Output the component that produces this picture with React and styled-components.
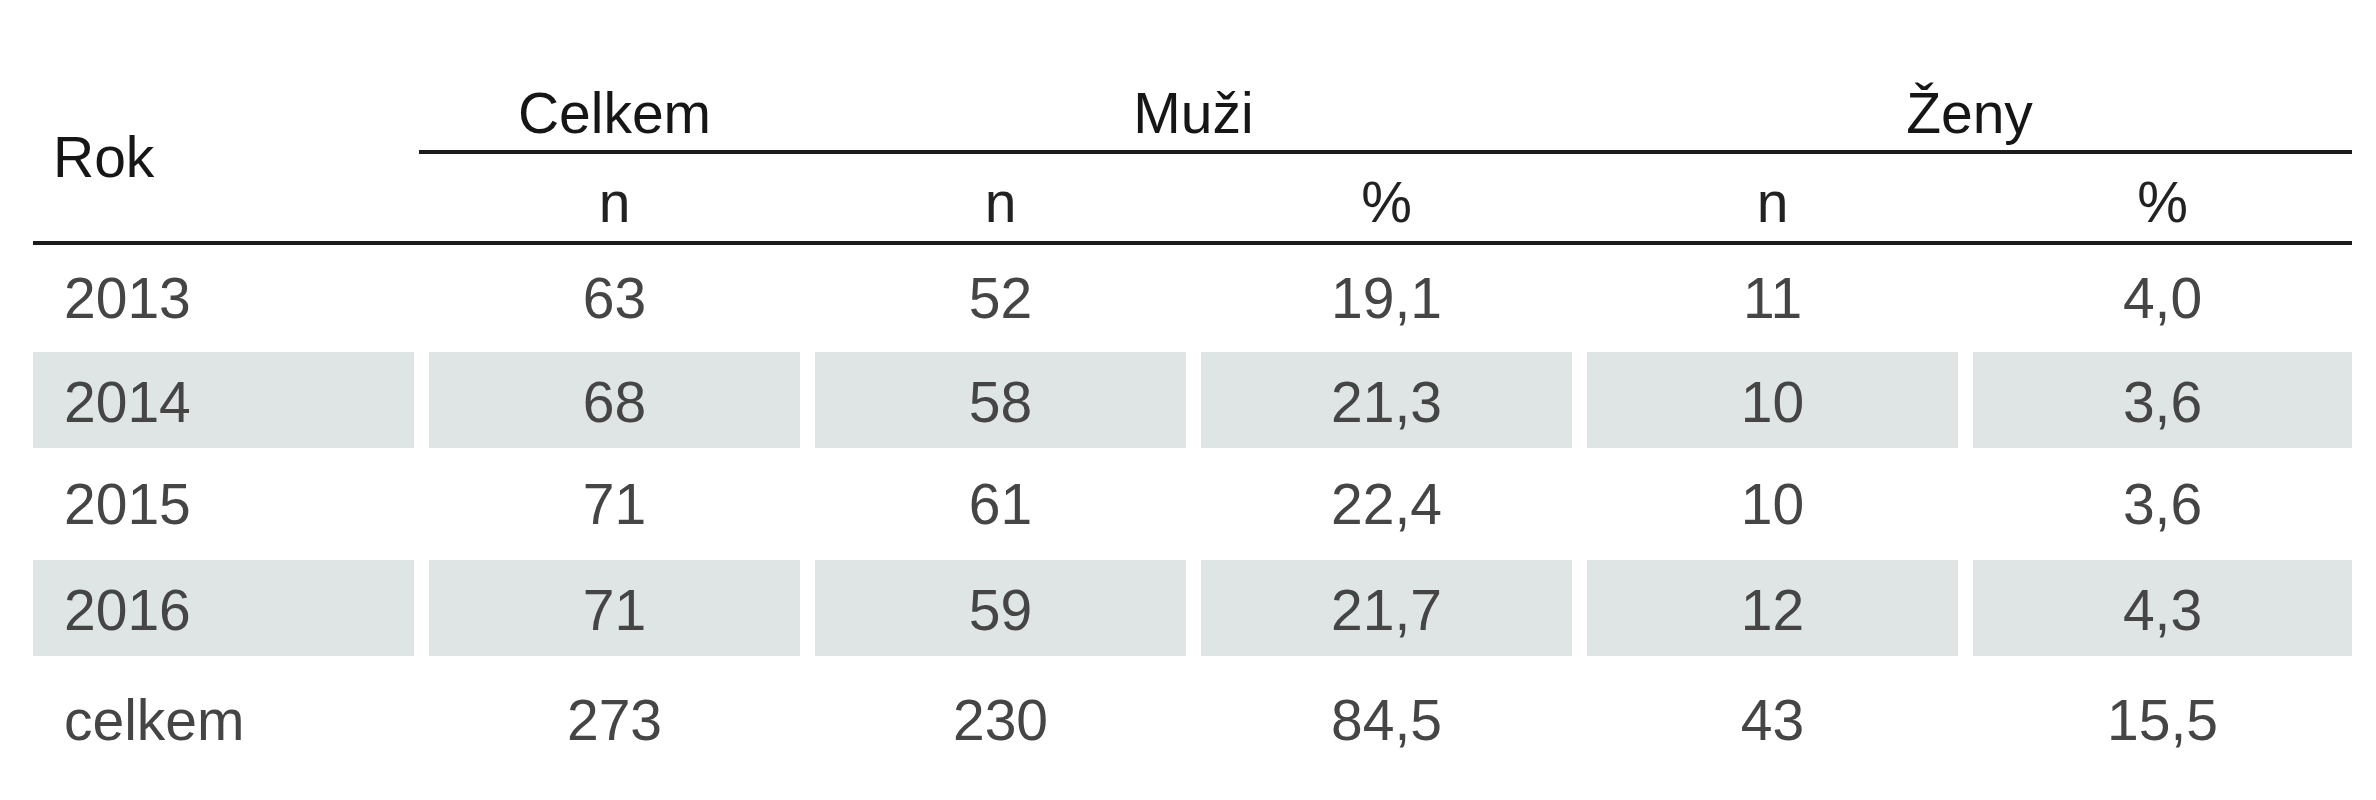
import styled, { createGlobalStyle } from "styled-components";

const GlobalStyle = createGlobalStyle`
  html, body {
    margin: 0;
    padding: 0;
    background: #ffffff;
  }
  body {
    font-family: "Liberation Sans", Arial, sans-serif;
  }
`;

// row heights follow the printed table: white rows are taller than shaded bands
const rows = [
  { h: 107, v: ["2013", "63", "52", "19,1", "11", "4,0"] },
  { h: 96, v: ["2014", "68", "58", "21,3", "10", "3,6"], shaded: true },
  { h: 112, v: ["2015", "71", "61", "22,4", "10", "3,6"] },
  { h: 96, v: ["2016", "71", "59", "21,7", "12", "4,3"], shaded: true },
  { h: 128, v: ["celkem", "273", "230", "84,5", "43", "15,5"] },
];

export default function App() {
  return (
    <Page>
      <GlobalStyle />
      <Table>
        <Head>
          <RokCell>Rok</RokCell>
          <GroupTitle $col="2 / 3">Celkem</GroupTitle>
          <GroupTitle $col="3 / 5">Muži</GroupTitle>
          <GroupTitle $col="5 / 7">Ženy</GroupTitle>
          <GroupRule />
          <SubTitle $col="2 / 3">n</SubTitle>
          <SubTitle $col="3 / 4">n</SubTitle>
          <SubTitle $col="4 / 5">%</SubTitle>
          <SubTitle $col="5 / 6">n</SubTitle>
          <SubTitle $col="6 / 7">%</SubTitle>
        </Head>
        <HeadRule />
        <Body>
          {rows.map((r) => (
            <Row key={r.v[0]} $h={r.h}>
              {r.v.map((v, j) => (
                <Cell key={j} $shaded={r.shaded} $first={j === 0}>
                  {v}
                </Cell>
              ))}
            </Row>
          ))}
        </Body>
      </Table>
    </Page>
  );
}

const Page = styled.div`
  width: 2376px;
  height: 800px;
  box-sizing: border-box;
  padding-left: 33px;
  overflow: hidden;
`;

const Table = styled.div`
  width: 2319px;
  display: flex;
  flex-direction: column;
`;

const columns = `381px 371px 371px 371px 371px 379px`;

const Head = styled.div`
  display: grid;
  grid-template-columns: ${columns};
  grid-template-rows: 150px 4px 87px;
  column-gap: 15px;
  color: #161616;
  font-size: 57px;
  line-height: 1;
`;

const RokCell = styled.div`
  grid-column: 1 / 2;
  grid-row: 1 / 4;
  align-self: end;
  padding: 0 0 55px 20px;
`;

const GroupTitle = styled.div`
  grid-column: ${(p) => p.$col};
  grid-row: 1 / 2;
  align-self: end;
  text-align: center;
  padding-bottom: 8px;
`;

const GroupRule = styled.div`
  grid-column: 2 / 7;
  grid-row: 2 / 3;
  margin-left: -10px;
  background: #1b1b1b;
`;

const SubTitle = styled.div`
  grid-column: ${(p) => p.$col};
  grid-row: 3 / 4;
  align-self: end;
  text-align: center;
  padding-bottom: 10px;
  color: #222222;
`;

const HeadRule = styled.div`
  height: 4px;
  background: #1b1b1b;
`;

const Body = styled.div`
  display: flex;
  flex-direction: column;
`;

const Row = styled.div`
  display: grid;
  grid-template-columns: ${columns};
  column-gap: 15px;
  height: ${(p) => p.$h}px;
  font-size: 57px;
  line-height: 1;
  color: #454545;
`;

const Cell = styled.div`
  display: flex;
  align-items: center;
  justify-content: ${(p) => (p.$first ? "flex-start" : "center")};
  padding-left: ${(p) => (p.$first ? "31px" : "0")};
  padding-top: ${(p) => (p.$shaded ? "4px" : "0")};
  background: ${(p) => (p.$shaded ? "#dfe5e4" : "transparent")};
`;
